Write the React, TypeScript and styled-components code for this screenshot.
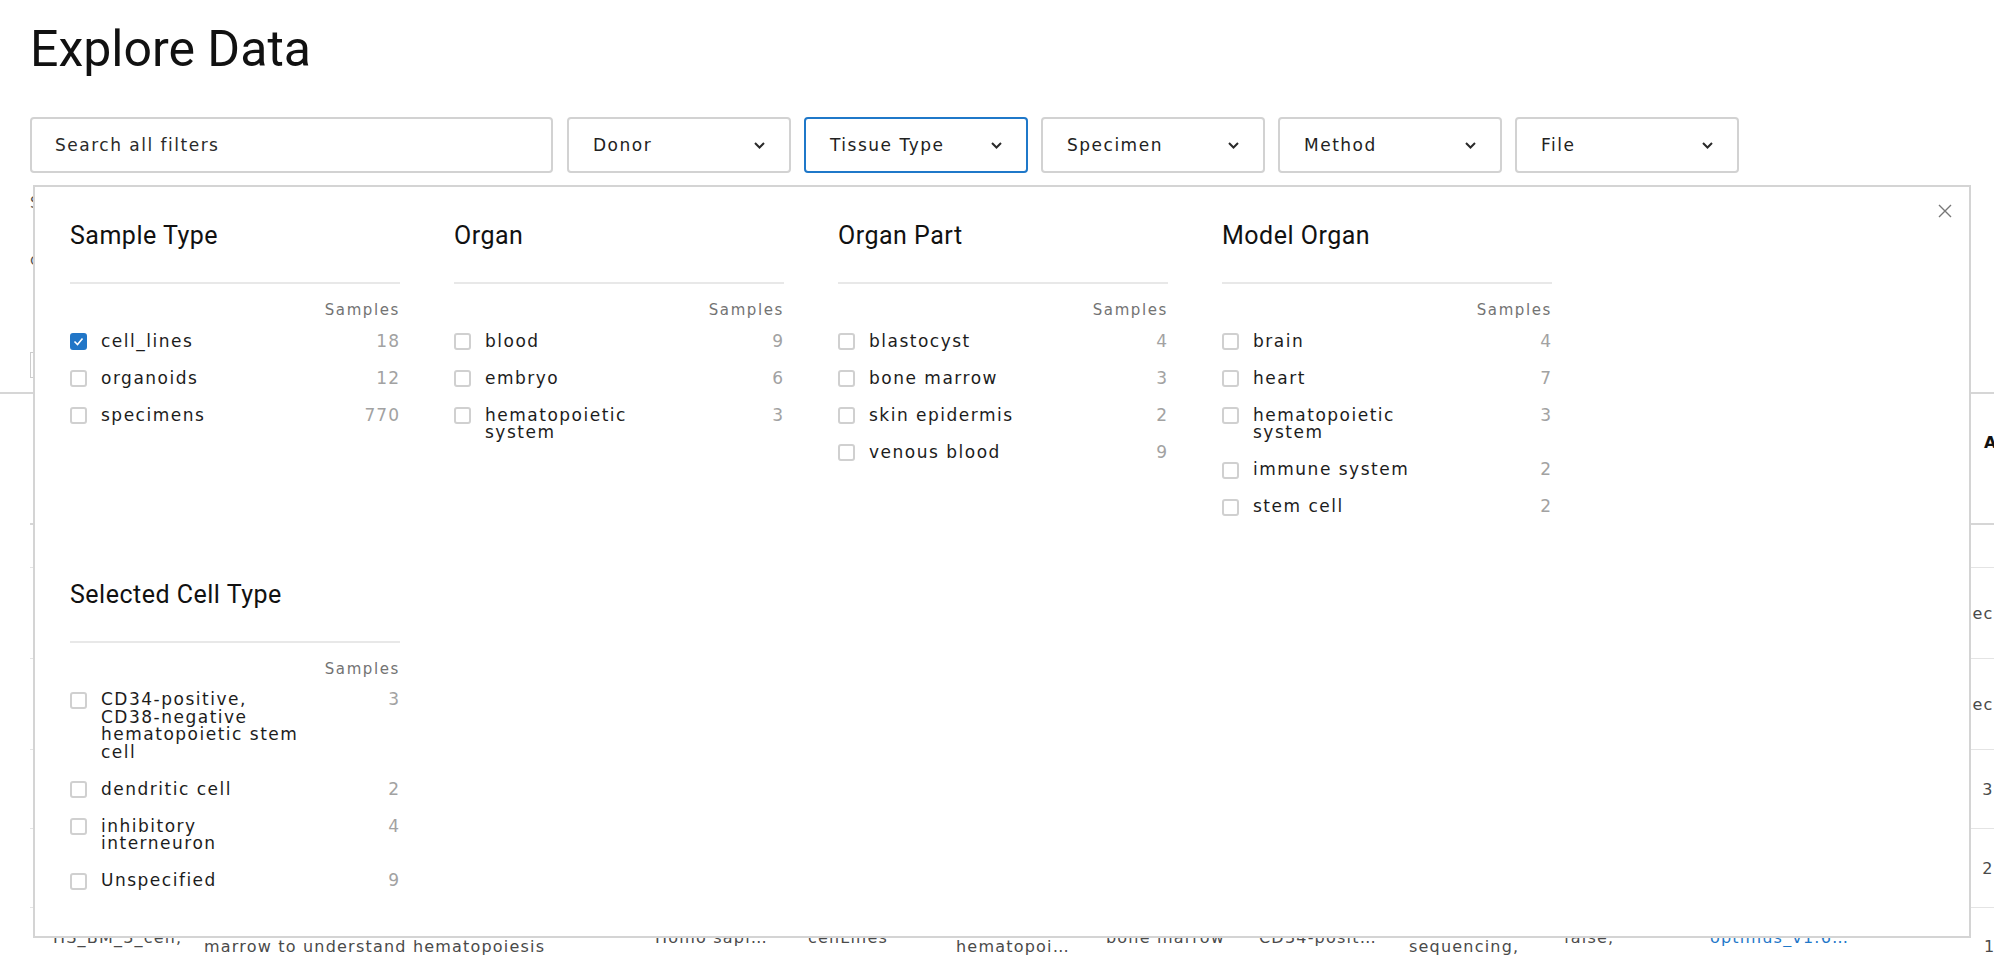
import { Fragment } from "react";
import styled, { createGlobalStyle } from "styled-components";

interface FacetItem {
  label: string;
  count: number;
  checked?: boolean;
}

interface Facet {
  title: string;
  items: FacetItem[];
}

const facets: Facet[] = [
  {
    title: "Sample Type",
    items: [
      { label: "cell_lines", count: 18, checked: true },
      { label: "organoids", count: 12 },
      { label: "specimens", count: 770 },
    ],
  },
  {
    title: "Organ",
    items: [
      { label: "blood", count: 9 },
      { label: "embryo", count: 6 },
      { label: "hematopoietic system", count: 3 },
    ],
  },
  {
    title: "Organ Part",
    items: [
      { label: "blastocyst", count: 4 },
      { label: "bone marrow", count: 3 },
      { label: "skin epidermis", count: 2 },
      { label: "venous blood", count: 9 },
    ],
  },
  {
    title: "Model Organ",
    items: [
      { label: "brain", count: 4 },
      { label: "heart", count: 7 },
      { label: "hematopoietic system", count: 3 },
      { label: "immune system", count: 2 },
      { label: "stem cell", count: 2 },
    ],
  },
  {
    title: "Selected Cell Type",
    items: [
      { label: "CD34-positive, CD38-negative hematopoietic stem cell", count: 3 },
      { label: "dendritic cell", count: 2 },
      { label: "inhibitory interneuron", count: 4 },
      { label: "Unspecified", count: 9 },
    ],
  },
];

const dropdowns = ["Donor", "Tissue Type", "Specimen", "Method", "File"];

// the results table behind the open dropdown; only its edges show
const colWidths = [158, 451, 153, 148, 150, 153, 150, 155, 146, 274, 82];
const lastCol = colWidths.length - 1;
const bodyRows: { height: number; value: string }[] = [
  { height: 43, value: "" },
  { height: 91, value: "Unspecified" },
  { height: 91, value: "Unspecified" },
  { height: 79, value: "3,582" },
  { height: 79, value: "2,841" },
];
const lastRow: string[][] = [
  ["HS_BM_3_cell,"],
  ["Profiling of CD34+ cells from human bone", "marrow to understand hematopoiesis"],
  ["Homo sapiens"],
  ["cellLines"],
  ["bone marrow,", "hematopoietic system"],
  ["bone marrow"],
  ["CD34-positive, CD38-negative"],
  ["10x 3' v2", "sequencing,"],
  ["false,"],
  ["optimus_v1.6.0, optimus_v1.4.0"],
  ["", "1,974"],
];

// keep hyphenated words together so they wrap like the reference
const renderLabel = (label: string) =>
  label.split(" ").map((word, i) => (
    <Fragment key={i}>
      {i > 0 && " "}
      {word.includes("-") ? <NoBreak>{word}</NoBreak> : word}
    </Fragment>
  ));

const Chevron = () => (
  <svg width="11" height="7" viewBox="0 0 11 7" fill="none">
    <path d="M1 1l4.5 4.5L10 1" stroke="#2a2a2a" strokeWidth="2" />
  </svg>
);

const CheckMark = () => (
  <svg width="11" height="9" viewBox="0 0 11 9" fill="none">
    <path d="M1.5 4.5l3 3 5-6" stroke="#fff" strokeWidth="1.6" />
  </svg>
);

export default function App() {
  return (
    <>
      <GlobalStyle />
      <Page>
        <Title>Explore Data</Title>
        <FilterArea>
          <FilterRow>
            <SearchBox>Search all filters</SearchBox>
            {dropdowns.map((name) => (
              <Dropdown key={name} $active={name === "Tissue Type"}>
                <span>{name}</span>
                <Chevron />
              </Dropdown>
            ))}
          </FilterRow>

          <Panel>
            <CloseButton aria-label="close">
              <svg width="14" height="14" viewBox="0 0 14 14">
                <path d="M1 1l12 12M13 1L1 13" stroke="#777" strokeWidth="1.4" />
              </svg>
            </CloseButton>
            <FacetGrid>
              {facets.map((facet) => (
                <FacetColumn key={facet.title}>
                  <FacetTitle>{facet.title}</FacetTitle>
                  <Divider />
                  <SamplesHeader>Samples</SamplesHeader>
                  {facet.items.map((item) => (
                    <ItemRow key={item.label}>
                      <Checkbox $checked={!!item.checked}>
                        {item.checked && <CheckMark />}
                      </Checkbox>
                      <ItemLabel>{renderLabel(item.label)}</ItemLabel>
                      <ItemCount>{item.count}</ItemCount>
                    </ItemRow>
                  ))}
                </FacetColumn>
              ))}
            </FacetGrid>
          </Panel>
        </FilterArea>

        <Summary>Selected Terms: cell_lines</Summary>
        <SubSummary>clear all</SubSummary>
        <TabBox>Projects</TabBox>
      </Page>

      <TableRule />
      <Table>
        <HeaderRow>
          {colWidths.map((w, i) => (
            <HeaderCell key={i} style={{ width: w }}>
              {i === lastCol ? "Analysis Cell Count" : ""}
            </HeaderCell>
          ))}
        </HeaderRow>
        {bodyRows.map((row, r) => (
          <BodyRow key={r} style={{ height: row.height }}>
            {colWidths.map((w, i) => (
              <BodyCell key={i} style={{ width: w }} $right={i === lastCol}>
                {i === lastCol ? row.value : ""}
              </BodyCell>
            ))}
          </BodyRow>
        ))}
        <BodyRow style={{ height: 60 }}>
          {colWidths.map((w, i) => (
            <LastCell
              key={i}
              style={{ width: w }}
              $right={i === lastCol}
              $first={i === 0}
            >
              {lastRow[i].map((line, l) =>
                i === 9 ? (
                  <LinkLine key={l}>{line}</LinkLine>
                ) : (
                  <CellLine key={l} $clip={i !== 0}>
                    {line || "\u00a0"}
                  </CellLine>
                )
              )}
            </LastCell>
          ))}
        </BodyRow>
      </Table>
    </>
  );
}

const GlobalStyle = createGlobalStyle`
  html, body {
    margin: 0;
    padding: 0;
    background: #fff;
    overflow: hidden;
  }
  body {
    font-family: "DejaVu Sans", sans-serif;
    color: #222;
  }
  * {
    box-sizing: border-box;
  }
`;

const Page = styled.div`
  padding: 19px 0 0 30px;
  width: 1994px;
`;

const Title = styled.h1`
  margin: 0;
  font-family: Roboto, sans-serif;
  font-weight: 400;
  font-size: 50px;
  line-height: 60px;
  color: #111;
`;

const FilterArea = styled.div`
  position: relative;
  margin-top: 38px;
  width: 1964px;
`;

const FilterRow = styled.div`
  display: flex;
  gap: 13px;
`;

const boxBase = `
  height: 56px;
  border: 2px solid #d2d2d2;
  border-radius: 4px;
  background: #fff;
  display: flex;
  align-items: center;
  font-size: 17px;
  letter-spacing: 1.5px;
  color: #222;
`;

const SearchBox = styled.div`
  ${boxBase}
  width: 523px;
  margin-right: 1px;
  padding-left: 23px;
  color: #2a2a2a;
`;

const Dropdown = styled.div<{ $active: boolean }>`
  ${boxBase}
  width: 224px;
  padding: 0 24px 0 24px;
  justify-content: space-between;
  border-color: ${(p) => (p.$active ? "#1f78c9" : "#d2d2d2")};
`;

const Panel = styled.div`
  position: absolute;
  top: calc(100% + 12px);
  left: 3px;
  width: 1938px;
  background: #fff;
  border: 2px solid #d4d4d4;
  padding: 35px 0 36px 35px;
  z-index: 10;
`;

const CloseButton = styled.div`
  position: absolute;
  top: 17px;
  right: 17px;
  width: 14px;
  height: 14px;
  display: flex;
`;

const FacetGrid = styled.div`
  display: grid;
  grid-template-columns: repeat(4, 330px);
  column-gap: 54px;
  row-gap: 55px;
  align-items: start;
`;

const FacetColumn = styled.div`
  display: flex;
  flex-direction: column;
`;

const FacetTitle = styled.div`
  font-family: Roboto, sans-serif;
  font-size: 25px;
  line-height: 28px;
  letter-spacing: 0.5px;
  color: #111;
`;

const Divider = styled.div`
  margin-top: 32px;
  height: 2px;
  background: #e8e8e8;
`;

const SamplesHeader = styled.div`
  margin-top: 17px;
  margin-bottom: 4px;
  text-align: right;
  font-size: 15px;
  line-height: 18px;
  letter-spacing: 1.6px;
  color: #737373;
`;

const ItemRow = styled.div`
  display: grid;
  grid-template-columns: 17px 214px 1fr auto;
  column-gap: 14px;
  align-items: start;
  padding: 9.75px 0;
  font-size: 17px;
  line-height: 17.5px;
  letter-spacing: 1.5px;
`;

const Checkbox = styled.div<{ $checked: boolean }>`
  grid-column: 1;
  width: 17px;
  height: 17px;
  margin-top: 0.5px;
  border-radius: 3px;
  border: 2px solid ${(p) => (p.$checked ? "#2176c7" : "#d0d0d0")};
  background: ${(p) => (p.$checked ? "#2176c7" : "#fff")};
  display: flex;
  align-items: center;
  justify-content: center;
`;

const ItemLabel = styled.div`
  grid-column: 2;
  color: #1c1c1c;
`;

const NoBreak = styled.span`
  white-space: nowrap;
`;

const ItemCount = styled.div`
  grid-column: 4;
  text-align: right;
  color: #a2a2a2;
  letter-spacing: 1px;
`;

const Summary = styled.div`
  margin-top: 20px;
  font-size: 15px;
  line-height: 20px;
  color: #555;
`;

const SubSummary = styled.div`
  margin-top: 37px;
  font-size: 15px;
  line-height: 20px;
  color: #555;
`;

const TabBox = styled.div`
  margin-top: 82px;
  width: 160px;
  height: 26px;
  border: 1px solid #ccc;
  font-size: 14px;
  line-height: 24px;
  padding-left: 12px;
`;

const TableRule = styled.div`
  margin-top: 14px;
  height: 2px;
  width: 100%;
  background: #d6d6d6;
`;

const Table = styled.div`
  margin-left: 30px;
  width: 2200px;
  font-size: 16px;
  letter-spacing: 1.2px;
  color: #4a4a4a;
`;

const HeaderRow = styled.div`
  display: flex;
  height: 131px;
  border-bottom: 2px solid #d6d6d6;
`;

const HeaderCell = styled.div`
  flex: none;
  padding: 39px 16px 0;
  font-size: 16px;
  line-height: 20px;
  font-weight: 600;
  color: #111;
  white-space: nowrap;
  overflow: hidden;
`;

const BodyRow = styled.div`
  display: flex;
  border-bottom: 1px solid #e4e4e4;
`;

const BodyCell = styled.div<{ $right: boolean }>`
  flex: none;
  display: flex;
  align-items: center;
  justify-content: ${(p) => (p.$right ? "flex-end" : "flex-start")};
  padding: 0 16px;
  white-space: nowrap;
  overflow: hidden;
`;

const LastCell = styled.div<{ $right: boolean; $first: boolean }>`
  flex: none;
  display: flex;
  flex-direction: column;
  justify-content: center;
  padding: ${(p) => (p.$first ? "0 0 0 23px" : "0 16px")};
  text-align: ${(p) => (p.$right ? "right" : "left")};
  overflow: ${(p) => (p.$first ? "visible" : "hidden")};
`;

const CellLine = styled.div<{ $clip?: boolean }>`
  line-height: 18px;
  white-space: nowrap;
  overflow: ${(p) => (p.$clip === false ? "visible" : "hidden")};
  text-overflow: ellipsis;
`;

const LinkLine = styled(CellLine)`
  max-width: 140px;
  color: #1f78c9;
`;
